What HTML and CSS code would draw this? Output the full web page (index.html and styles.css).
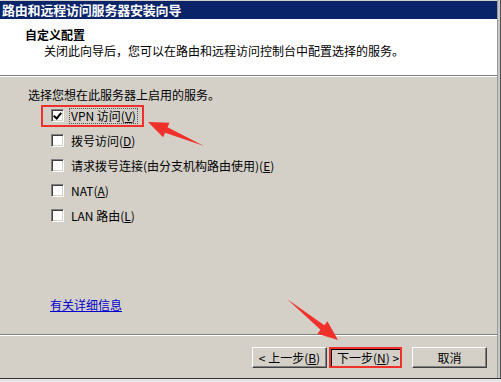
FILE: index.html
```html
<!DOCTYPE html>
<html lang="zh-CN">
<head>
  <meta charset="UTF-8" />
  <title>路由和远程访问服务器安装向导</title>
  <link rel="stylesheet" href="styles.css">
</head>
<body>
  <div class="screen">
    <div class="window">
      <div class="titlebar">路由和远程访问服务器安装向导</div>

      <div class="header">
        <div class="header-title">自定义配置</div>
        <div class="header-sub">关闭此向导后，您可以在路由和远程访问控制台中配置选择的服务。</div>
      </div>

      <div class="content">
        <div class="prompt">选择您想在此服务器上启用的服务。</div>
        <ul class="options">
          <li><span class="option marked"><span class="check checked"></span><span class="label focus">VPN 访问(<u>V</u>)</span></span></li>
          <li><span class="option"><span class="check"></span><span class="label">拨号访问(<u>D</u>)</span></span></li>
          <li><span class="option"><span class="check"></span><span class="label">请求拨号连接(由分支机构路由使用)(<u>E</u>)</span></span></li>
          <li><span class="option"><span class="check"></span><span class="label">NAT(<u>A</u>)</span></span></li>
          <li><span class="option"><span class="check"></span><span class="label">LAN 路由(<u>L</u>)</span></span></li>
        </ul>
        <a class="more" href="#">有关详细信息</a>
      </div>

      <div class="footer">
        <div class="buttons">
          <button class="btn">&lt; 上一步(<u>B</u>)</button>
          <button class="btn btn-next">下一步(<u>N</u>) &gt;</button>
          <button class="btn btn-cancel">取消</button>
        </div>
      </div>
    </div>
    <div class="edge"></div>
  </div>
  <div class="taskbar"></div>

  <svg class="arrows" width="501" height="382" viewBox="0 0 501 382">
    <polygon points="148,122 169.5,122.7 167.5,127.2 204,146 165.1,132.8 163.1,137.3" />
    <polygon points="338,340 317.4,333.7 320.5,329.8 287,299 324.3,325.2 327.4,321.3" />
  </svg>
</body>
</html>
```

FILE: styles.css
```css
:root {
  --face: #d4d0c8;
  --shadow: #808080;
  --dark: #404040;
  --title: #0a246a;
  --mark: #f0302a;
}

body {
  margin: 0;
  width: 501px;
  height: 382px;
  overflow: hidden;
  position: relative;
  font-family: "Noto Sans CJK SC", "DejaVu Sans", sans-serif;
  font-size: 12px;
  color: #000;
  background: var(--face);
}

.screen {
  display: flex;
  height: 378px;
}

.window {
  width: 497px;
  display: flex;
  flex-direction: column;
  background: var(--face);
}

.edge {
  width: 4px;
  background: #c8c8c8;
  border-left: 1px solid #9a9a9a;
  border-right: 1px solid #505050;
  box-sizing: border-box;
}

.taskbar {
  height: 4px;
  border-top: 1px solid #303030;
  background: #e6e6e6;
  box-sizing: border-box;
}

.titlebar {
  height: 18px;
  line-height: 18px;
  padding-left: 2px;
  margin-top: 1px;
  background: var(--title);
  color: #fff;
  font-weight: bold;
  font-size: 13px;
  letter-spacing: -0.2px;
}

.header {
  height: 57px;
  background: #fff;
  padding: 8px 0 0 25px;
  box-sizing: border-box;
  border-bottom: 1px solid var(--shadow);
  box-shadow: 0 1px 0 #fff;
}

.header-title {
  font-weight: bold;
  line-height: 16px;
}

.header-sub {
  padding-left: 19px;
  line-height: 16px;
}

.content {
  flex: 1;
  padding: 11px 0 0 28px;
}

.prompt {
  line-height: 16px;
}

.options {
  list-style: none;
  margin: 0;
  padding: 0 0 0 13px;
}

.options li {
  height: 25px;
  display: flex;
  align-items: center;
}

.option {
  display: inline-flex;
  align-items: center;
  gap: 5px;
  padding: 1px 4px 1px 8px;
  border: 2px solid transparent;
}

.option.marked {
  border-color: var(--mark);
}

.check {
  width: 13px;
  height: 13px;
  box-sizing: border-box;
  background: #fff;
  border-top: 1px solid var(--shadow);
  border-left: 1px solid var(--shadow);
  border-bottom: 1px solid #fff;
  border-right: 1px solid #fff;
  box-shadow: inset 1px 1px 0 var(--dark), inset -1px -1px 0 var(--face);
  position: relative;
}

.check.checked::after {
  content: "";
  position: absolute;
  left: 3px;
  top: 1px;
  width: 3px;
  height: 6px;
  border-right: 2px solid #000;
  border-bottom: 2px solid #000;
  transform: rotate(40deg);
}

.label {
  line-height: 14px;
  padding: 0 1px;
  border: 1px dotted transparent;
}

.label.focus {
  border-color: #555;
}

.more {
  display: inline-block;
  margin: 68px 0 0 22px;
  color: #0000cc;
  text-decoration: underline;
}

.footer {
  height: 44px;
  border-top: 1px solid var(--shadow);
  box-shadow: inset 0 1px 0 #fff;
  box-sizing: border-box;
  padding: 12px 10px 0 0;
}

.buttons {
  display: flex;
  justify-content: flex-end;
}

.btn {
  font: inherit;
  width: 75px;
  height: 21px;
  padding: 0;
  background: var(--face);
  color: #000;
  border-top: 1px solid #fff;
  border-left: 1px solid #fff;
  border-bottom: 1px solid var(--dark);
  border-right: 1px solid var(--dark);
  box-shadow: inset -1px -1px 0 var(--shadow);
}

.btn-next {
  width: 73px;
  margin-left: 2px;
  border: 2px solid var(--mark);
  box-shadow: inset 1px 1px 0 #000;
  text-align: left;
  padding-left: 6px;
}

.btn-cancel {
  margin-left: 10px;
}

.arrows {
  position: absolute;
  left: 0;
  top: 0;
  pointer-events: none;
}

.arrows polygon {
  fill: var(--mark);
}
```
